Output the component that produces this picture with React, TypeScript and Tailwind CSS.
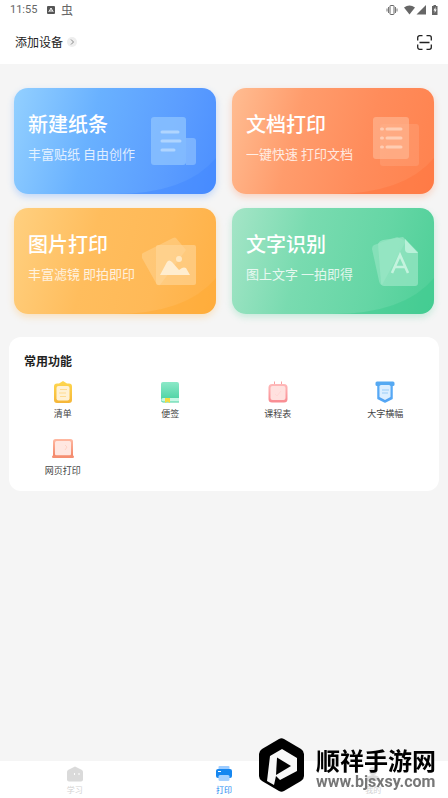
import type { ReactNode } from 'react';

function StatusBar() {
  return (
    <div className="flex h-5 items-center justify-between px-[10px] text-[#666]">
      <div className="flex items-center">
        <span className="w-[37px] font-[Roboto,sans-serif] text-[11px] leading-4">11:55</span>
        <svg viewBox="0 0 8 8" className="h-2 w-2" aria-hidden="true">
          <rect width="8" height="8" rx="1" fill="#555" />
          <path d="M1.8 6 4 2l2.2 4M3 5h2" stroke="#fff" fill="none" />
        </svg>
        <span className="ml-[6px] text-xs leading-4">虫</span>
      </div>
      <svg viewBox="0 0 52 12" className="h-3 w-[52px]" fill="#666" aria-hidden="true">
        <path d="M1 4.500v3M2.500 3v6M11 4.500v3M9.500 3v6" stroke="#777" fill="none" />
        <rect x="4" y="1.500" width="4" height="9" rx=".6" fill="none" stroke="#666" />
        <path d="M18 3.500Q23.500-.5 29 3.500L23.500 10.500Z" />
        <path d="M40 1v9.500h-9.500Z" />
        <path d="M46 2h1.500V1H50v1h1.500v9H46Z" />
        <path d="m49.500 3-2 3.500h1.200V9l2-3.500h-1.200Z" fill="#fff" />
      </svg>
    </div>
  );
}

function Header() {
  return (
    <header className="bg-white">
      <StatusBar />
      <div className="flex h-11 items-center justify-between pl-[15px] pr-4">
        <button className="flex items-center gap-1 text-xs text-[#222]">
          添加设备
          <svg viewBox="0 0 10 10" className="h-[10px] w-[10px]" aria-hidden="true">
            <circle cx="5" cy="5" r="5" fill="#eee" />
            <path d="m4 2.500 2.500 2.500L4 7.500" fill="none" stroke="#888" />
          </svg>
        </button>
        <button aria-label="扫一扫">
          <svg viewBox="0 0 15 15" className="h-[15px] w-[15px]" fill="none" stroke="#222" strokeWidth="1.300" aria-hidden="true">
            <path d="M.7 5.500V2.700a2 2 0 0 1 2-2H5.500M9.500.7h2.800a2 2 0 0 1 2 2V5.500M14.300 9.500v2.800a2 2 0 0 1-2 2H9.500M5.500 14.300H2.700a2 2 0 0 1-2-2V9.500M2.500 7.500h10" />
          </svg>
        </button>
      </div>
    </header>
  );
}

function FeatureCard(props: { title: string; note: string; tone: string; corner: string; children: ReactNode }) {
  return (
    <button
      className={`relative flex h-[106px] items-center justify-between overflow-hidden rounded-[14px] px-[14px] text-left text-white ${props.tone}`}
    >
      <svg viewBox="0 0 202 106" preserveAspectRatio="none" className="absolute inset-0 h-full w-full" aria-hidden="true">
        <path d="M100 106Q172 106 202 70V106Z" fill={props.corner} />
      </svg>
      <span className="relative pb-2">
        <span className="block text-xl leading-7 font-medium">{props.title}</span>
        <span className="mt-[6px] block text-[13px] leading-5 whitespace-nowrap opacity-80">{props.note}</span>
      </span>
      <svg viewBox="0 0 60 60" className="relative -ml-12 h-[60px] w-[60px] shrink-0" aria-hidden="true">
        {props.children}
      </svg>
    </button>
  );
}

function Features() {
  return (
    <section className="grid grid-cols-2 gap-x-4 gap-y-[14px] px-[14px] pt-6">
      <FeatureCard
        title="新建纸条"
        note="丰富贴纸 自由创作"
        corner="#3f84ff66"
        tone="bg-[linear-gradient(105deg,#93d0ff_0%,#69b1ff_38%,#5b9dff_75%,#4c8fff_100%)] shadow-[0_3px_7px_#5b9dff55]"
      >
        <path d="M44 27h7a3 3 0 0 1 3 3v21a3 3 0 0 1-3 3h-7Z" fill="#9acbff" fillOpacity=".55" />
        <rect x="9" y="6" width="35" height="48" rx="3" fill="#8fc4ff" fillOpacity=".75" />
        <path d="M20 21h16M20 30h18M20 39h12" stroke="#b0d5ff" strokeWidth="3" strokeLinecap="round" />
      </FeatureCard>
      <FeatureCard
        title="文档打印"
        note="一键快速 打印文档"
        corner="#ff713966"
        tone="bg-[linear-gradient(105deg,#ffbd92_0%,#ff9c6c_32%,#ff8c5b_65%,#ff824e_100%)] shadow-[0_3px_7px_#ff8c5b55]"
      >
        <rect x="20" y="13" width="39" height="42" rx="3" fill="#ffb48e" fillOpacity=".3" />
        <rect x="13" y="6" width="36" height="42" rx="3" fill="#ffb48e" fillOpacity=".7" />
        <path d="M27 18h14M27 27h14M27 36h14M21.500 18h1M21.500 27h1M21.500 36h1" stroke="#ffcdb3" strokeWidth="3" strokeLinecap="round" />
      </FeatureCard>
      <FeatureCard
        title="图片打印"
        note="丰富滤镜 即拍即印"
        corner="#ffa72c66"
        tone="bg-[linear-gradient(105deg,#ffd080_0%,#ffbd5d_38%,#ffb957_70%,#ffb044_100%)] shadow-[0_3px_7px_#ffb95755]"
      >
        <path d="M1 22Q-2 24 0 27L14 52q2 3 4 2L44 19 34 7Q33 6 31 7Z" fill="#ffd695" fillOpacity=".5" />
        <rect x="14" y="14" width="40" height="40" rx="2" fill="#ffd79b" fillOpacity=".6" />
        <path d="M18 44 25 31q2-3 5 0l7 8 3-2q2-1 4 0l4 7Z" fill="#ffedcf" />
        <circle cx="37" cy="28" r="3" fill="#ffe7c0" />
      </FeatureCard>
      <FeatureCard
        title="文字识别"
        note="图上文字 一拍即得"
        corner="#35c98a66"
        tone="bg-[linear-gradient(105deg,#a5e5c7_0%,#79dbb0_35%,#65d6a5_70%,#4dcf97_100%)] shadow-[0_3px_7px_#65d6a555]"
      >
        <path d="M14 14 37 6l9 4L22 54Q20 54 19 50L12 18Q12 15 14 14Z" fill="#a3e9cb" fillOpacity=".5" />
        <path d="M23 9 43 6l15 15v31q0 3-3 3H24q-3 0-3-3L18 13q1-3 5-4Z" fill="#9be7c6" fillOpacity=".7" />
        <path d="M45 8v10q0 4 4 4h9Z" fill="#b9f1d9" />
        <path d="m32 42 8-18 8 18M34.500 36h11" fill="none" stroke="#c4f3de" strokeWidth="2.600" />
      </FeatureCard>
    </section>
  );
}

function Shortcut(props: { label: string; children: ReactNode }) {
  return (
    <button className="flex flex-col items-center gap-1 text-[9px] leading-3 text-[#444]">
      <svg viewBox="0 0 24 24" className="h-6 w-6" aria-hidden="true">
        {props.children}
      </svg>
      {props.label}
    </button>
  );
}

function Shortcuts() {
  return (
    <section className="mx-[9px] mt-[23px] rounded-xl bg-white py-[14px]">
      <svg className="absolute h-0 w-0" aria-hidden="true">
        <defs>
          <linearGradient id="gold" x2="0" y2="1"><stop stopColor="#ffd84f" /><stop offset="1" stopColor="#f5b638" /></linearGradient>
          <linearGradient id="mint" x2="0" y2="1"><stop stopColor="#8ce9c8" /><stop offset="1" stopColor="#44cf9e" /></linearGradient>
          <linearGradient id="rose" x2="0" y2="1"><stop stopColor="#ffb9b9" /><stop offset="1" stopColor="#f98b91" /></linearGradient>
          <linearGradient id="sky" x2="0" y2="1"><stop stopColor="#67b8f8" /><stop offset="1" stopColor="#4c9df3" /></linearGradient>
          <linearGradient id="coral" x2="0" y2="1"><stop stopColor="#ffb9a2" /><stop offset="1" stopColor="#f38769" /></linearGradient>
        </defs>
      </svg>
      <h2 className="px-[15px] text-xs leading-5 font-bold text-[#222]">常用功能</h2>
      <div className="mt-[9px] grid grid-cols-4 gap-y-[17px]">
        <Shortcut label="清单">
          <path d="M8 3.500 12 1l4 2.500h2a3 3 0 0 1 3 3V20a3 3 0 0 1-3 3H6a3 3 0 0 1-3-3V6.500a3 3 0 0 1 3-3Z" fill="url(#gold)" />
          <rect x="5.500" y="6" width="13" height="14.500" rx="2" fill="#fff1d5" />
          <path d="M9 9.500h7M8 13h7M9 16.500h6" stroke="#ffdb91" strokeWidth="1.200" />
        </Shortcut>
        <Shortcut label="便签">
          <path d="M5 2h14a2 2 0 0 1 2 2v18.500H5A2.500 2.500 0 0 1 3 20V4a2 2 0 0 1 2-2Z" fill="url(#mint)" />
          <path d="M5 18h16v3.500H5a1.750 1.750 0 0 1 0-3.500Z" fill="#c7f7e5" />
          <path d="M7 18h5v5l-2.500-1.500L7 23Z" fill="#f5dc41" />
        </Shortcut>
        <Shortcut label="课程表">
          <path d="M8.500 1.500v5M15.500 1.500v5" stroke="#f9a1a3" />
          <rect x="2.500" y="4" width="19" height="18.500" rx="3.500" fill="url(#rose)" />
          <rect x="4.500" y="6" width="15" height="14" rx="2" fill="#ffe1df" />
          <path d="m9 14 2 2 4-5" fill="none" stroke="#ffd8d6" />
        </Shortcut>
        <Shortcut label="大字横幅">
          <path d="M5 4h14v14.500L12 22 5 18.500Z" fill="url(#sky)" stroke="#56a8f5" strokeWidth="1.500" strokeLinejoin="round" />
          <rect x="2.500" y="1.500" width="19" height="4.500" rx="1.500" fill="#56a9f2" />
          <path d="M8 5h8q1.500 0 1.500 1.500v10.500L12 20l-5.500-3V6.500Q6.500 5 8 5Z" fill="#dceeff" />
          <path d="M9 10h7M9 13h6" stroke="#9acdf8" />
        </Shortcut>
        <Shortcut label="网页打印">
          <path d="M4.500 2h15Q22 2 22 4.500V19H2V4.500Q2 2 4.500 2Z" fill="url(#coral)" />
          <rect x="4" y="4" width="16" height="14.500" rx="1.500" fill="#ffe7e1" />
          <path d="m14 8 2 2-2 3" fill="none" stroke="#ffd3c7" />
          <rect x="1" y="18.500" width="22" height="2.500" rx="1.200" fill="#f58f72" />
        </Shortcut>
      </div>
    </section>
  );
}

function TabBar() {
  return (
    <nav className="grid h-[37px] grid-cols-3 bg-white text-[8px] leading-[10px] text-[#d3d3d3]">
      <a href="#study" className="flex flex-col items-center gap-[3px] pt-[5px]">
        <svg viewBox="0 0 16 16" className="h-4 w-4" aria-hidden="true">
          <path d="m4 2.500 4-2 4 2 3 1.500q1 1 1 2v7.500q0 2-2 2H2q-2 0-2-2V6q0-1 1-2Z" fill="#dadada" />
          <path d="M7.500 7v2M12 7v2" stroke="#fff" />
        </svg>
        学习
      </a>
      <a href="#print" aria-current="page" className="flex flex-col items-center gap-[3px] pt-[5px] text-[#1687f0]">
        <svg viewBox="0 0 16 16" className="h-4 w-4" aria-hidden="true">
          <rect x="2.500" width="11" height="6" rx="1" fill="#9dccff" />
          <rect y="3" width="16" height="9" rx="2" fill="#1687f0" />
          <rect x="2.500" y="9" width="11" height="6" rx="1.500" fill="#a6d1ff" />
          <path d="M2 5.500h3" stroke="#fff" />
        </svg>
        打印
      </a>
      <a href="#mine" className="flex flex-col items-center gap-[3px] pt-[5px]">
        <svg viewBox="0 0 16 16" className="h-4 w-4" fill="#dedede" aria-hidden="true">
          <circle cx="8" cy="5" r="4" />
          <path d="M1 15q0-6 7-6t7 6Z" />
        </svg>
        我的
      </a>
    </nav>
  );
}

function SiteMark() {
  return (
    <div className="pointer-events-none fixed right-3 bottom-[6px] flex items-center gap-3">
      <svg viewBox="0 0 45 54" className="h-[54px] w-[45px]" aria-hidden="true">
        <path d="M20 1q2.500-1.300 5 0l17 10q3 2 3 5v22q0 3-3 5L25 53q-2.500 1.300-5 0L3 43q-3-2-3-5V16q0-3 3-5Z" fill="#000" />
        <path d="M8 43 11 18 23 11 38 20V33L21 42 17 38 15 47Z" fill="#f8f8f8" />
        <path d="M18 19.500 32 28 17 37Z" fill="#000" />
      </svg>
      <div className="pt-[6px] font-bold whitespace-nowrap">
        <p className="text-2xl leading-7 text-black">顺祥手游网</p>
        <p className="font-[Roboto,sans-serif] text-base leading-4 text-[#777]">www.bjsxsy.com</p>
      </div>
    </div>
  );
}

export default function App() {
  return (
    <div className="flex min-h-screen flex-col bg-[#f5f5f5] font-['Noto_Sans_CJK_SC',sans-serif]">
      <Header />
      <main className="flex-1">
        <Features />
        <Shortcuts />
      </main>
      <TabBar />
      <SiteMark />
    </div>
  );
}
